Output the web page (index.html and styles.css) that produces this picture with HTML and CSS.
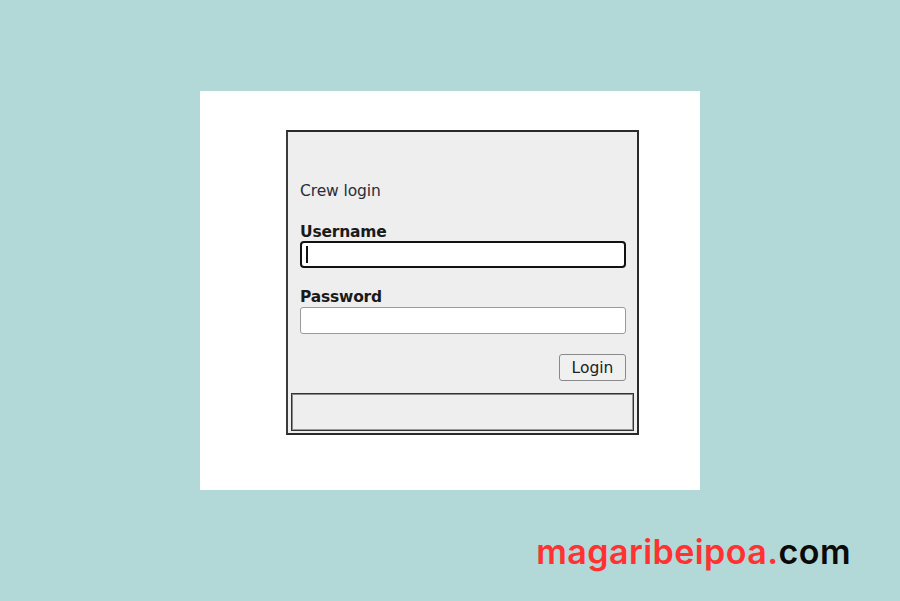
FILE: index.html
```html
<!DOCTYPE html>
<html>
<head>
<meta charset="utf-8">
<link rel="stylesheet" href="styles.css">
</head>
<body>
<div class="page">
  <div class="panel">
    <div class="login-box">
      <div class="form">
        <div class="title">Crew login</div>
        <label class="label label-user">Username</label>
        <div class="input input-focus"><span class="caret"></span></div>
        <label class="label label-pass">Password</label>
        <div class="input input-pass"></div>
        <div class="actions"><button class="btn">Login</button></div>
      </div>
      <div class="status"></div>
    </div>
  </div>
  <div class="brand"><span class="red">magaribeipoa.</span><span class="dark">com</span></div>
</div>
</body>
</html>
```
FILE: styles.css
```css
html, body {
  margin: 0;
  padding: 0;
}
body {
  background: #b2d8d8;
  width: 900px;
  height: 601px;
  overflow: hidden;
  font-family: "DejaVu Sans", Verdana, sans-serif;
}
.page {
  padding-top: 91px;
  display: flex;
  flex-direction: column;
}
.panel {
  margin-left: 200px;
  width: 500px;
  height: 399px;
  background: #ffffff;
  box-sizing: border-box;
  padding-top: 39px;
  padding-left: 86px;
}
.login-box {
  width: 353px;
  height: 305px;
  box-sizing: border-box;
  border: 2px solid #2a2a2a;
  border-left-color: #3a3a3a;
  background: #eeeeee;
  display: flex;
  flex-direction: column;
}
.form {
  padding: 50px 11px 0 12px;
  display: flex;
  flex-direction: column;
  flex: 1;
}
.title {
  font-size: 15.5px;
  line-height: 18px;
  color: #2b2b3a;
  height: 18px;
  letter-spacing: -0.1px;
}
.label {
  font-size: 15.5px;
  font-weight: bold;
  line-height: 18px;
  color: #1a1a1a;
  letter-spacing: -0.2px;
}
.label-user {
  margin-top: 23px;
}
.label-pass {
  margin-top: 20px;
}
.input {
  width: 326px;
  height: 27px;
  box-sizing: border-box;
  background: #ffffff;
  border: 1px solid #9a9a9a;
  border-radius: 3px;
  display: flex;
  align-items: center;
  padding-left: 5px;
}
.input-pass {
  margin-top: 1px;
}
.input-focus {
  border: 2px solid #111111;
  border-radius: 4px;
  padding-left: 4px;
}
.caret {
  width: 1.5px;
  height: 17px;
  background: #111;
}
.actions {
  margin-top: 20px;
  width: 326px;
  display: flex;
  justify-content: flex-end;
}
.btn {
  width: 67px;
  height: 27px;
  box-sizing: border-box;
  border: 1px solid #8a8a8a;
  border-radius: 3px;
  background: #f0f0f0;
  font-family: "DejaVu Sans", Verdana, sans-serif;
  font-size: 15.5px;
  color: #222;
  padding: 0;
}
.status {
  margin: 0 3px 2px 3px;
  height: 38px;
  box-sizing: border-box;
  border: 1px solid #333;
  box-shadow: inset 1px 1px 0 #888, inset -1px -1px 0 #999;
  background: #eeeeee;
}
.brand {
  align-self: flex-end;
  margin-right: 49px;
  margin-top: 42px;
  font-family: Inter, "Open Sans", sans-serif;
  font-weight: 600;
  font-size: 34px;
  line-height: 40px;
  letter-spacing: 0.45px;
}
.red {
  color: #ff3131;
}
.dark {
  color: #0a0a0a;
}
```
